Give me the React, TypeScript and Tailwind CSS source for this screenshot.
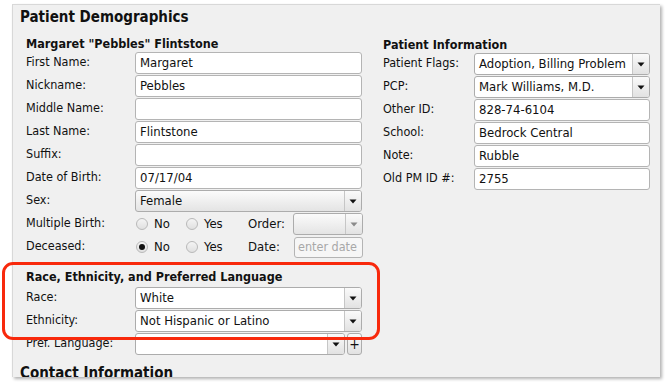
import React from "react";

const FONT = { fontFamily: '"DejaVu Sans Condensed", "DejaVu Sans", sans-serif' };

function Arrow({ disabled }: { disabled?: boolean }) {
  return (
    <div className="flex h-full w-[17px] shrink-0 items-center justify-center border-l border-[#c6c6c6] bg-gradient-to-b from-[#fafafa] to-[#e2e2e2]">
      <svg width="8" height="5" viewBox="0 0 8 5">
        <path d="M0.5 0.5 L7.5 0.5 L4 4.5 Z" fill={disabled ? "#8a8a8a" : "#111"} />
      </svg>
    </div>
  );
}

function TextInput({ value, className = "" }: { value?: string; className?: string }) {
  return (
    <div
      className={
        "flex h-[22px] items-center rounded-[3px] border border-[#b4b4b4] bg-white pl-[4px] text-[13px] text-[#111] " +
        className
      }
    >
      {value}
    </div>
  );
}

function Select({
  value,
  shaded,
  disabled,
  className = "",
}: {
  value?: string;
  shaded?: boolean;
  disabled?: boolean;
  className?: string;
}) {
  return (
    <div
      className={
        "flex h-[22px] items-center overflow-hidden rounded-[3px] border border-[#acacac] " +
        (shaded || disabled ? "bg-gradient-to-b from-[#fbfbfb] to-[#e4e4e4] " : "bg-white ") +
        className
      }
    >
      <div className="flex-1 truncate pl-[4px] text-[13px] text-[#111]">{value}</div>
      <Arrow disabled={disabled} />
    </div>
  );
}

function Radio({ checked, label }: { checked?: boolean; label: string }) {
  return (
    <div className="flex items-center gap-[6px]">
      <div className="flex h-[12px] w-[12px] items-center justify-center rounded-full border border-[#b9b9b9] bg-gradient-to-b from-[#f4f4f4] to-[#e0e0e0]">
        {checked && <div className="h-[6px] w-[6px] rounded-full bg-[#111]" />}
      </div>
      <span className="text-[13px] text-[#111]">{label}</span>
    </div>
  );
}

function Row({ label, children, labelW = "w-[109px]" }: { label: string; children: React.ReactNode; labelW?: string }) {
  return (
    <div className="flex h-[22px] items-center">
      <div className={labelW + " shrink-0 -mt-[2px] text-[12.5px] text-[#111]"}>{label}</div>
      <div className="flex-1">{children}</div>
    </div>
  );
}

export default function App() {
  return (
    <div className="relative h-[383px] w-[666px] overflow-hidden bg-white" style={FONT}>
      <div className="ml-[12px] mt-[4px] h-[373px] w-[648px] overflow-hidden border-l border-t border-[#d8d8d8] bg-[#f0f0f0] shadow-[2px_2px_3px_rgba(0,0,0,0.3)]">
        <div className="pl-[7px] pt-[2px] text-[15px] font-bold leading-[20px] text-[#111]">Patient Demographics</div>

        <div className="mt-[8px] flex pl-[13px]">
          {/* Left column */}
          <div className="flex w-[336px] flex-col">
            <div className="h-[17px] text-[12.5px] font-bold leading-[17px] text-[#111]">Margaret "Pebbles" Flintstone</div>
            <div className="flex flex-col gap-[1px]">
              <Row label="First Name:"><TextInput value="Margaret" /></Row>
              <Row label="Nickname:"><TextInput value="Pebbles" /></Row>
              <Row label="Middle Name:"><TextInput /></Row>
              <Row label="Last Name:"><TextInput value="Flintstone" /></Row>
              <Row label="Suffix:"><TextInput /></Row>
              <Row label="Date of Birth:"><TextInput value="07/17/04" /></Row>
              <Row label="Sex:"><Select value="Female" shaded /></Row>
              <Row label="Multiple Birth:">
                <div className="flex items-center pl-[1px]">
                  <div className="w-[50px]"><Radio label="No" /></div>
                  <div className="w-[62px]"><Radio label="Yes" /></div>
                  <div className="w-[45px] text-[13px] text-[#111]">Order:</div>
                  <Select disabled className="w-[70px]" />
                </div>
              </Row>
              <Row label="Deceased:">
                <div className="flex items-center pl-[1px]">
                  <div className="w-[50px]"><Radio label="No" checked /></div>
                  <div className="w-[62px]"><Radio label="Yes" /></div>
                  <div className="w-[46px] text-[13px] text-[#111]">Date:</div>
                  <div className="flex h-[21px] w-[69px] items-center rounded-[3px] border border-[#b4b4b4] bg-[#f6f6f6] pl-[3px] text-[12.5px] text-[#a8a8a8]">
                    enter date
                  </div>
                </div>
              </Row>
            </div>

            <div className="mt-[10px] h-[19px] text-[12.5px] font-bold leading-[17px] text-[#111]">
              Race, Ethnicity, and Preferred Language
            </div>
            <div className="flex flex-col gap-[1px]">
              <Row label="Race:"><Select value="White" /></Row>
              <Row label="Ethnicity:"><Select value="Not Hispanic or Latino" /></Row>
              <Row label="Pref. Language:">
                <div className="flex items-center gap-[2px]">
                  <Select className="flex-1" />
                  <div className="flex h-[22px] w-[15px] items-center justify-center rounded-[3px] border border-[#acacac] bg-gradient-to-b from-[#fafafa] to-[#e2e2e2] text-[14px] leading-none text-[#111]">
                    +
                  </div>
                </div>
              </Row>
            </div>
          </div>

          {/* Right column */}
          <div className="ml-[21px] flex w-[267px] flex-col pt-[1px]">
            <div className="h-[17px] text-[12.5px] font-bold leading-[17px] text-[#111]">Patient Information</div>
            <div className="flex flex-col gap-[1px]">
              <Row label="Patient Flags:" labelW="w-[91px]"><Select value="Adoption, Billing Problem" /></Row>
              <Row label="PCP:" labelW="w-[91px]"><Select value="Mark Williams, M.D." /></Row>
              <Row label="Other ID:" labelW="w-[91px]"><TextInput value="828-74-6104" /></Row>
              <Row label="School:" labelW="w-[91px]"><TextInput value="Bedrock Central" /></Row>
              <Row label="Note:" labelW="w-[91px]"><TextInput value="Rubble" /></Row>
              <Row label="Old PM ID #:" labelW="w-[91px]"><TextInput value="2755" /></Row>
            </div>
          </div>
        </div>

        <div className="mt-[8px] pl-[7px] text-[15px] font-bold leading-[20px] text-[#111]">Contact Information</div>
      </div>

      {/* callout highlight */}
      <div className="absolute left-[2px] top-[262px] h-[78px] w-[378px] rounded-[11px] border-[3px] border-[#f8290c]" />
    </div>
  );
}
